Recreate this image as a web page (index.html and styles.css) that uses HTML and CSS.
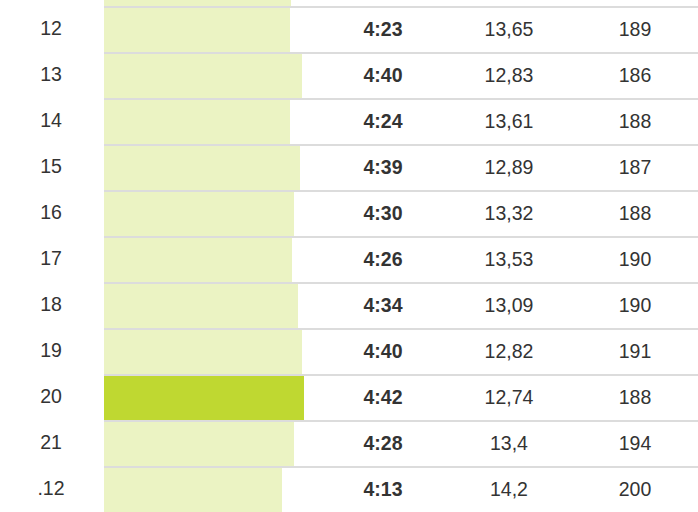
FILE: index.html
```html
<!DOCTYPE html>
<html>
<head>
<meta charset="utf-8">
<link rel="stylesheet" href="styles.css">
</head>
<body>
<div class="splits">
  <div class="row row--clipped">
    <div class="num"></div>
    <div class="bar-cell"><div class="bar" style="width:187px"></div></div>
    <div class="cell"></div><div class="cell"></div><div class="cell"></div>
  </div>
  <div class="row">
    <div class="num">12</div>
    <div class="bar-cell"><div class="bar" style="width:186px"></div></div>
    <div class="cell pace">4:23</div><div class="cell">13,65</div><div class="cell">189</div>
  </div>
  <div class="row">
    <div class="num">13</div>
    <div class="bar-cell"><div class="bar" style="width:198px"></div></div>
    <div class="cell pace">4:40</div><div class="cell">12,83</div><div class="cell">186</div>
  </div>
  <div class="row">
    <div class="num">14</div>
    <div class="bar-cell"><div class="bar" style="width:186px"></div></div>
    <div class="cell pace">4:24</div><div class="cell">13,61</div><div class="cell">188</div>
  </div>
  <div class="row">
    <div class="num">15</div>
    <div class="bar-cell"><div class="bar" style="width:196px"></div></div>
    <div class="cell pace">4:39</div><div class="cell">12,89</div><div class="cell">187</div>
  </div>
  <div class="row">
    <div class="num">16</div>
    <div class="bar-cell"><div class="bar" style="width:190px"></div></div>
    <div class="cell pace">4:30</div><div class="cell">13,32</div><div class="cell">188</div>
  </div>
  <div class="row">
    <div class="num">17</div>
    <div class="bar-cell"><div class="bar" style="width:188px"></div></div>
    <div class="cell pace">4:26</div><div class="cell">13,53</div><div class="cell">190</div>
  </div>
  <div class="row">
    <div class="num">18</div>
    <div class="bar-cell"><div class="bar" style="width:194px"></div></div>
    <div class="cell pace">4:34</div><div class="cell">13,09</div><div class="cell">190</div>
  </div>
  <div class="row">
    <div class="num">19</div>
    <div class="bar-cell"><div class="bar" style="width:198px"></div></div>
    <div class="cell pace">4:40</div><div class="cell">12,82</div><div class="cell">191</div>
  </div>
  <div class="row">
    <div class="num">20</div>
    <div class="bar-cell"><div class="bar bar--best" style="width:200px"></div></div>
    <div class="cell pace">4:42</div><div class="cell">12,74</div><div class="cell">188</div>
  </div>
  <div class="row">
    <div class="num">21</div>
    <div class="bar-cell"><div class="bar" style="width:190px"></div></div>
    <div class="cell pace">4:28</div><div class="cell">13,4</div><div class="cell">194</div>
  </div>
  <div class="row">
    <div class="num">.12</div>
    <div class="bar-cell"><div class="bar" style="width:178px"></div></div>
    <div class="cell pace">4:13</div><div class="cell">14,2</div><div class="cell">200</div>
  </div>
</div>
</body>
</html>
```

FILE: styles.css
```css
html, body {
  margin: 0;
  padding: 0;
  background: #ffffff;
}

body {
  font-family: "Liberation Sans", Arial, sans-serif;
  font-size: 19.5px;
  color: #333333;
  overflow: hidden;
}

.splits {
  width: 698px;
}

.row {
  display: grid;
  grid-template-columns: 104px 216px 126px 126px 126px;
  height: 46px;
}

.row--clipped {
  height: 6px;
}

.row--clipped .bar-cell,
.row--clipped .cell {
  border-top: 0;
}

.num {
  display: flex;
  align-items: center;
  justify-content: center;
  padding-right: 2px;
  padding-bottom: 1px;
}

.bar-cell {
  border-top: 2px solid #dcdcdc;
  display: flex;
}

.bar {
  height: 100%;
  background: #ebf3c3;
}

.bar--best {
  background: #bfd831;
}

.cell {
  border-top: 2px solid #dcdcdc;
  display: flex;
  align-items: center;
  justify-content: center;
  padding-bottom: 1px;
}

.pace {
  font-weight: bold;
}
```
